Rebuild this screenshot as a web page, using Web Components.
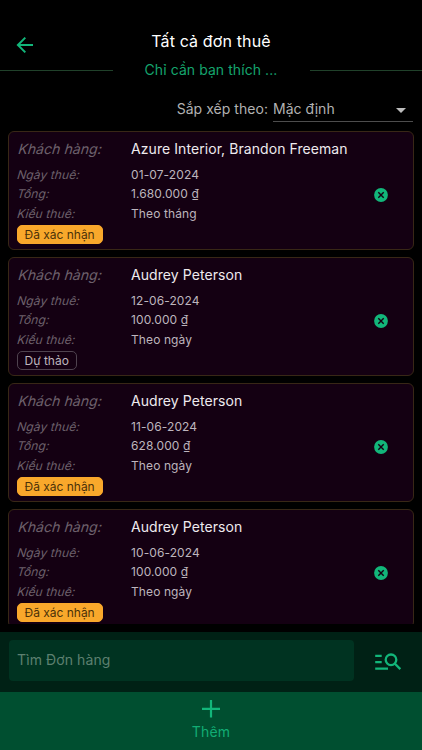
<!DOCTYPE html>
<html lang="vi">
<head>
<meta charset="UTF-8">
<meta name="viewport" content="width=device-width, initial-scale=1.0">
<title>Tất cả đơn thuê</title>
<style>
    body {
        margin: 0;
        background: #000;
        color: #fff;
        font-family: Inter, Roboto, sans-serif;
    }
</style>
</head>
<body>
<rental-app></rental-app>
<script>
class AppHeader extends HTMLElement {
    connectedCallback() {
        this.attachShadow({ mode: 'open' });
        this.shadowRoot.innerHTML = `
            <style>
                :host { display: block; height: 84px; padding-top: 28px; box-sizing: border-box; }
                .bar { display: grid; grid-template-columns: 50px 1fr 50px; height: 28px; }
                .bar svg { width: 18px; height: 18px; margin: 8px 0 0 16px; }
                h1 {
                    margin: 0;
                    text-align: center;
                    font-size: 16px;
                    font-weight: 400;
                    line-height: 26px;
                    letter-spacing: 0.13px;
                }
                .tagline { display: flex; align-items: center; height: 28px; color: #15a56e; }
                .tagline span {
                    flex: 1;
                    text-align: center;
                    font-size: 14px;
                    letter-spacing: 0.07px;
                    padding-bottom: 1px;
                }
                .tagline i { width: 112.5px; height: 1px; background: #20412a; }
            </style>
            <div class="bar">
                <svg viewBox="0 0 18 18" fill="none" stroke="#12b67a" stroke-width="2"><path d="M17 9H2.5M9.3 1.6 1.9 9l7.4 7.4"/></svg>
                <h1><slot></slot></h1>
            </div>
            <div class="tagline"><i></i><span><slot name="tagline"></slot></span><i></i></div>
        `;
    }
}
customElements.define('app-header', AppHeader);

class SortSelect extends HTMLElement {
    connectedCallback() {
        this.attachShadow({ mode: 'open' });
        this.shadowRoot.innerHTML = `
            <style>
                :host {
                    display: flex;
                    justify-content: flex-end;
                    height: 47px;
                    padding: 12px 9px 0 0;
                    box-sizing: border-box;
                    font-size: 14px;
                    line-height: 26px;
                    letter-spacing: 0.04px;
                    color: #b2b2b2;
                }
                .label { margin-right: 5px; }
                .field {
                    display: flex;
                    align-items: center;
                    justify-content: space-between;
                    width: 140px;
                    height: 26px;
                    box-sizing: border-box;
                    border-bottom: 1px solid #4d4d4d;
                }
                svg { width: 10px; height: 5px; margin: 3px 7px 0 0; }
            </style>
            <span class="label"><slot name="label"></slot></span>
            <div class="field">
                <span><slot></slot></span>
                <svg viewBox="0 0 10 5"><path d="M0 0h10L5 5z" fill="#bdbdbd"/></svg>
            </div>
        `;
    }
}
customElements.define('sort-select', SortSelect);

class OrderCard extends HTMLElement {
    connectedCallback() {
        const get = name => this.getAttribute(name) || '';
        this.attachShadow({ mode: 'open' });
        this.shadowRoot.innerHTML = `
            <style>
                :host {
                    display: grid;
                    grid-template-columns: 1fr 49px;
                    align-items: center;
                    flex: none;
                    height: 119px;
                    box-sizing: border-box;
                    padding-left: 8px;
                    border: 1px solid #382716;
                    border-radius: 6px;
                    background: #140012;
                }
                .info { align-self: start; padding-top: 7px; }
                .row { display: grid; grid-template-columns: 114px 1fr; height: 19.4px; line-height: 19.4px; font-size: 12px; letter-spacing: 0.1px; color: #bdb5bd; white-space: nowrap; }
                .row.customer { height: 26px; line-height: 20px; font-size: 14px; letter-spacing: 0.07px; color: #eeeaee; }
                .key { margin-left: -1px; transform: skewX(-16deg); transform-origin: 0 75%; color: #6d606c; }
                .badge {
                    display: inline-block;
                    height: 19px;
                    line-height: 17px;
                    margin-top: 1px;
                    padding: 0 7px 0 6.5px;
                    box-sizing: border-box;
                    border: 1px solid #4f434f;
                    border-radius: 5px;
                    font-size: 12px;
                    letter-spacing: -0.01px;
                    color: #bdb5bd;
                }
                .badge.confirmed { background: #f9a82b; border-color: #f9a82b; color: #4b3109; }
                svg { width: 14px; height: 14px; margin: 9px 0 0 9.5px; }
            </style>
            <div class="info">
                <div class="row customer"><span class="key">Khách hàng:</span><span>${get('customer')}</span></div>
                <div class="row"><span class="key">Ngày thuê:</span><span>${get('date')}</span></div>
                <div class="row"><span class="key">Tổng:</span><span>${get('total')}</span></div>
                <div class="row"><span class="key">Kiểu thuê:</span><span>${get('period')}</span></div>
                <span class="badge ${get('state')}"><slot></slot></span>
            </div>
            <svg viewBox="0 0 14 14"><circle cx="7" cy="7" r="6.9" fill="#12b67a"/><path d="m4.3 4.3 5.4 5.4m0-5.4-5.4 5.4" stroke="#140012" stroke-width="1.4"/></svg>
        `;
    }
}
customElements.define('order-card', OrderCard);

class OrderList extends HTMLElement {
    connectedCallback() {
        this.attachShadow({ mode: 'open' });
        this.shadowRoot.innerHTML = `
            <style>
                :host { display: flex; flex-direction: column; gap: 7px; flex: 1; min-height: 0; overflow: hidden; margin: 0 8px 8px; }
            </style>
            <slot></slot>
        `;
    }
}
customElements.define('order-list', OrderList);

class SearchBar extends HTMLElement {
    connectedCallback() {
        this.attachShadow({ mode: 'open' });
        this.shadowRoot.innerHTML = `
            <style>
                :host { display: flex; flex: none; height: 60px; padding: 8px 0 11px 9px; box-sizing: border-box; background: #002115; }
                .input {
                    width: 345px;
                    padding-left: 8px;
                    box-sizing: border-box;
                    border-radius: 4px;
                    background: #003321;
                    color: #5d8070;
                    font-size: 14px;
                    line-height: 39px;
                    letter-spacing: 0.1px;
                }
                svg { width: 28px; height: 20px; margin: 12px 0 0 20px; }
            </style>
            <div class="input"><slot></slot></div>
            <svg viewBox="0 0 28 20" fill="none" stroke="#12b67a" stroke-width="2.3"><path d="M1.2 3.8h6.5M1.2 10.2h6.5M1.2 16.6H14"/><circle cx="17" cy="7.8" r="5.3"/><path d="m20.7 11.5 5.6 5.6"/></svg>
        `;
    }
}
customElements.define('search-bar', SearchBar);

class AddButton extends HTMLElement {
    connectedCallback() {
        this.attachShadow({ mode: 'open' });
        this.shadowRoot.innerHTML = `
            <style>
                :host {
                    display: flex;
                    flex-direction: column;
                    align-items: center;
                    flex: none;
                    height: 58px;
                    padding-top: 8px;
                    box-sizing: border-box;
                    background: #004f30;
                    color: #12ad74;
                    font-size: 14px;
                    line-height: 20px;
                    letter-spacing: 0.2px;
                }
                svg { width: 18px; height: 18px; margin-bottom: 4px; }
            </style>
            <svg viewBox="0 0 18 18" stroke="#12b67a" stroke-width="2.2"><path d="M9 0v17.5M0 8.8h18"/></svg>
            <span><slot></slot></span>
        `;
    }
}
customElements.define('add-button', AddButton);

class RentalApp extends HTMLElement {
    connectedCallback() {
        this.attachShadow({ mode: 'open' });
        this.shadowRoot.innerHTML = `
            <style>
                :host { display: flex; flex-direction: column; height: 750px; overflow: hidden; }
            </style>
            <app-header>Tất cả đơn thuê<span slot="tagline">Chỉ cần bạn thích ...</span></app-header>
            <sort-select><span slot="label">Sắp xếp theo:</span>Mặc định</sort-select>
            <order-list>
                <order-card customer="Azure Interior, Brandon Freeman" date="01-07-2024" total="1.680.000 ₫" period="Theo tháng" state="confirmed">Đã xác nhận</order-card>
                <order-card customer="Audrey Peterson" date="12-06-2024" total="100.000 ₫" period="Theo ngày" state="draft">Dự thảo</order-card>
                <order-card customer="Audrey Peterson" date="11-06-2024" total="628.000 ₫" period="Theo ngày" state="confirmed">Đã xác nhận</order-card>
                <order-card customer="Audrey Peterson" date="10-06-2024" total="100.000 ₫" period="Theo ngày" state="confirmed">Đã xác nhận</order-card>
            </order-list>
            <search-bar>Tìm Đơn hàng</search-bar>
            <add-button>Thêm</add-button>
        `;
    }
}
customElements.define('rental-app', RentalApp);
</script>
</body>
</html>
